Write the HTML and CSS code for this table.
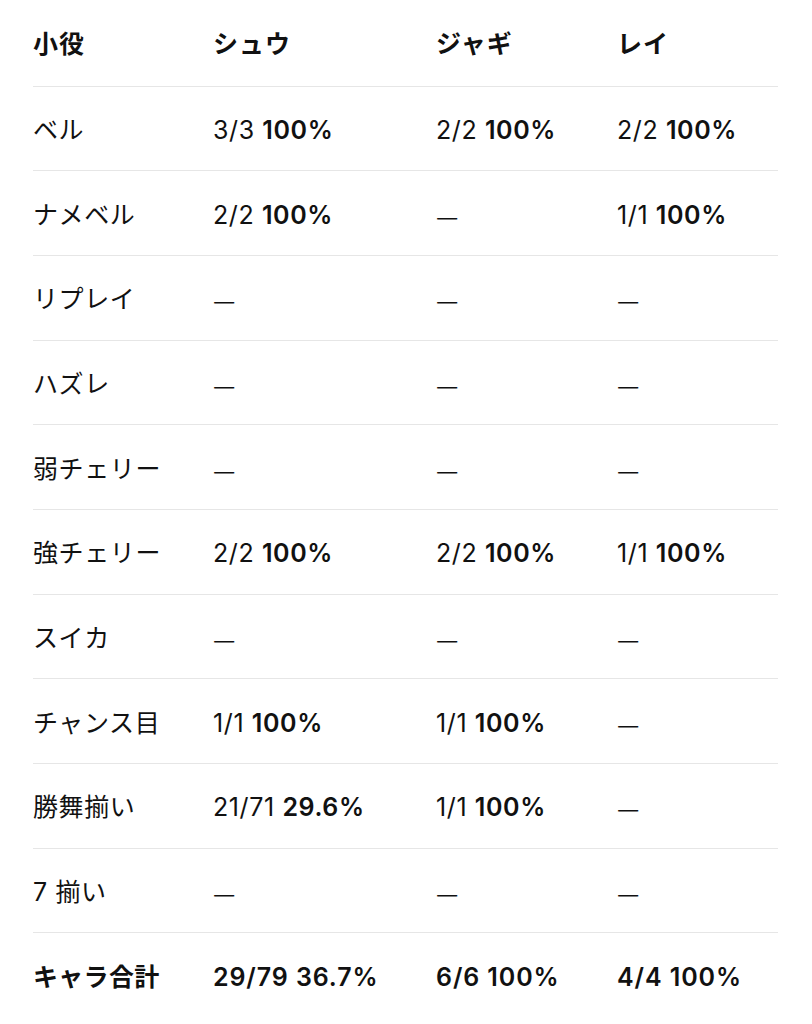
FILE: index.html
```html
<!DOCTYPE html>
<html lang="ja">
<head>
<meta charset="utf-8">
<link rel="stylesheet" href="styles.css">
</head>
<body>
<table class="stats">
  <colgroup>
    <col class="c1"><col class="c2"><col class="c3"><col class="c4">
  </colgroup>
  <thead>
    <tr><th>小役</th><th>シュウ</th><th>ジャギ</th><th>レイ</th></tr>
  </thead>
  <tbody>
    <tr><td>ベル</td><td>3/3 <b>100%</b></td><td>2/2 <b>100%</b></td><td>2/2 <b>100%</b></td></tr>
    <tr><td>ナメベル</td><td>2/2 <b>100%</b></td><td class="dash">—</td><td>1/1 <b>100%</b></td></tr>
    <tr><td>リプレイ</td><td class="dash">—</td><td class="dash">—</td><td class="dash">—</td></tr>
    <tr><td>ハズレ</td><td class="dash">—</td><td class="dash">—</td><td class="dash">—</td></tr>
    <tr><td>弱チェリー</td><td class="dash">—</td><td class="dash">—</td><td class="dash">—</td></tr>
    <tr><td>強チェリー</td><td>2/2 <b>100%</b></td><td>2/2 <b>100%</b></td><td>1/1 <b>100%</b></td></tr>
    <tr><td>スイカ</td><td class="dash">—</td><td class="dash">—</td><td class="dash">—</td></tr>
    <tr><td>チャンス目</td><td>1/1 <b>100%</b></td><td>1/1 <b>100%</b></td><td class="dash">—</td></tr>
    <tr><td>勝舞揃い</td><td>21/71 <b>29.6%</b></td><td>1/1 <b>100%</b></td><td class="dash">—</td></tr>
    <tr><td>7 揃い</td><td class="dash">—</td><td class="dash">—</td><td class="dash">—</td></tr>
    <tr class="total"><td class="label">キャラ合計</td><td>29/79 36.7%</td><td>6/6 100%</td><td>4/4 100%</td></tr>
  </tbody>
</table>
</body>
</html>
```

FILE: styles.css
```css
html, body {
  margin: 0;
  padding: 0;
  background: #ffffff;
}
body {
  font-family: Inter, "Noto Sans CJK JP", sans-serif;
  color: #111111;
  font-size: 25px;
}
.stats {
  margin: 0 0 0 33px;
  width: 745px;
  border-collapse: collapse;
  table-layout: fixed;
}
.c1 { width: 180px; }
.c2 { width: 223px; }
.c3 { width: 181px; }
.c4 { width: 161px; }
.stats tr {
  height: 84.7px;
}
.stats thead tr {
  height: 86px;
}
.stats th,
.stats td {
  padding: 3px 0 0;
  text-align: left;
  vertical-align: middle;
  line-height: 24px;
  letter-spacing: 0.6px;
  border-bottom: 1.3px solid #e6e6e6;
}
.stats th {
  font-weight: 700;
  letter-spacing: 1px;
}
.stats td {
  font-weight: 400;
}
.stats b {
  font-weight: 600;
}
.stats tr.total td {
  font-weight: 600;
  letter-spacing: 0.9px;
  border-bottom: none;
}
.stats tr.total td.label {
  letter-spacing: 0.3px;
}
.dash {
  font-family: "Noto Sans CJK JP", sans-serif;
}
```
